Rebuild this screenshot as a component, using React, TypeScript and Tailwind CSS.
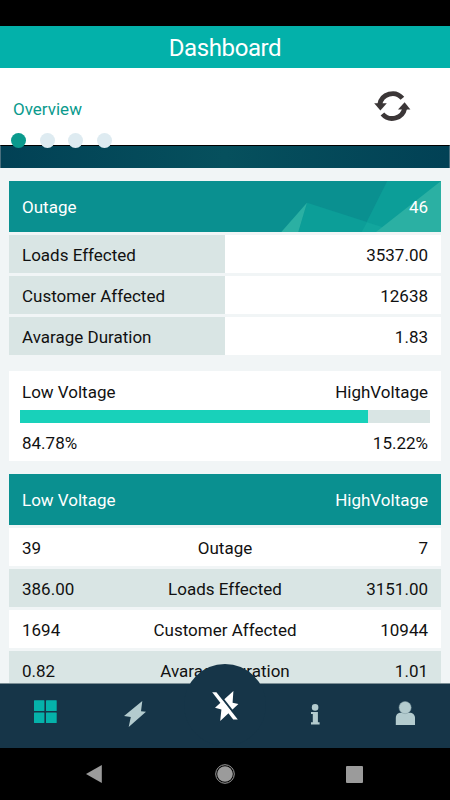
import type { ReactNode } from 'react';

const OUTAGE_ROWS = [
  { label: 'Loads Effected', value: '3537.00' },
  { label: 'Customer Affected', value: '12638' },
  { label: 'Avarage Duration', value: '1.83' },
];

const VOLTAGE_ROWS = [
  { low: '39', label: 'Outage', high: '7' },
  { low: '386.00', label: 'Loads Effected', high: '3151.00' },
  { low: '1694', label: 'Customer Affected', high: '10944' },
  { low: '0.82', label: 'Avarage Duration', high: '1.01' },
];

const LOW_SHARE = 84.78;

const RefreshIcon = () => (
  <svg width="38" height="32" viewBox="373 90 38 32" fill="none">
    <path d="M379.8 104.5 A12.9 12.9 0 0 1 402.4 98.3" stroke="#3b3637" strokeWidth="4.8" />
    <path d="M404.8 108 A12.9 12.9 0 0 1 382.4 114" stroke="#3b3637" strokeWidth="4.8" />
    <path d="M374.2 103.2H386.8L380.4 110.5Z" fill="#3b3637" />
    <path d="M398 109.4H410.4L404.6 102.2Z" fill="#3b3637" />
  </svg>
);

const GridIcon = () => (
  <svg width="24" height="24" viewBox="33 700 24 24" fill="#05b2aa">
    <rect x="34" y="700.3" width="10.4" height="10.7" rx="0.5" />
    <rect x="46" y="700.3" width="10.7" height="10.7" rx="0.5" />
    <rect x="34" y="712.4" width="10.4" height="10.7" rx="0.5" />
    <rect x="46" y="712.4" width="10.7" height="10.7" rx="0.5" />
  </svg>
);

const BoltIcon = () => (
  <svg width="24" height="28" viewBox="123 700 24 28" fill="#b3cbce">
    <path d="M142.3 701L141 711.2L146 711.7L128.7 727L130.8 717L124 716.1Z" />
  </svg>
);

const BoltOffIcon = () => (
  <svg width="30" height="32" viewBox="210 690 30 32">
    <path d="M233.4 691L232.6 702.8L238.4 704L220.2 721L221.4 709.5L215 707.7Z" fill="#fff" />
    <path d="M217.2 691.9L238.6 719.2" stroke="#163548" strokeWidth="2.2" />
    <path d="M212.2 692.3H216.4L237.8 719.6H233.2Z" fill="#fff" />
  </svg>
);

const InfoIcon = () => (
  <svg width="12" height="24" viewBox="309 702 12 24" fill="#b3cbce">
    <circle cx="315.1" cy="707.4" r="3.3" />
    <path d="M311 712H317.9V722.2H319.6V724.4H311V722.2H312.8V714H311Z" />
  </svg>
);

const PersonIcon = () => (
  <svg width="22" height="26" viewBox="394 700 22 26">
    <path d="M395.8 725V718C395.8 714.4 398 712.7 401 712.7H409.5C412.6 712.7 415 714.6 415 718V725Z" fill="#b3cbce" />
    <circle cx="405.1" cy="707.6" r="6.1" fill="#b3cbce" stroke="#7d979f" strokeWidth="0.5" />
  </svg>
);

const CardHeader = ({ children }: { children: ReactNode }) => (
  <div className="relative flex h-[51px] items-center justify-between bg-[#0a9090] px-[13px] pt-0.5 text-white">
    {children}
  </div>
);

const HeaderFacets = () => (
  <svg className="absolute inset-0" width="432" height="51" viewBox="0 0 432 51">
    <path d="M298 21.7L289.3 51H389Z" fill="#0c9e98" />
    <path d="M298 21.7L272.3 51H289.3Z" fill="#2bb0a3" />
    <path d="M378.3 0L352.7 51H432V0Z" fill="#0c9e98" />
    <path d="M358 41.2L352.7 51H389Z" fill="#12a69d" />
    <path d="M432 0L367 51H432Z" fill="#2bb0a3" />
  </svg>
);

export default function App() {
  return (
    <div className="flex h-[800px] w-[450px] flex-col overflow-hidden bg-[#f1f5f6] font-['Roboto',sans-serif] text-[17px] text-[#111]">
      <div className="h-[26px] shrink-0 bg-black" />
      <header className="flex h-[42px] shrink-0 items-center justify-center bg-[#03b1aa] pt-0.5 text-2xl tracking-[-0.4px] text-white">
        Dashboard
      </header>

      <section className="relative h-[77px] shrink-0 bg-white">
        <div className="flex items-center justify-between pt-[22px] pr-[39px] pl-[13px]">
          <span className="pt-[7px] text-[17px] text-[#0a9a8d]">Overview</span>
          <RefreshIcon />
        </div>
        <div className="absolute top-[65px] left-[11px] z-10 flex gap-[13.6px]">
          <span className="size-[15px] rounded-full bg-[#0a9a8d]" />
          <span className="size-[15px] rounded-full bg-[#deebf1]" />
          <span className="size-[15px] rounded-full bg-[#deebf1]" />
          <span className="size-[15px] rounded-full bg-[#deebf1]" />
        </div>
      </section>
      <div className="h-[23px] shrink-0 border-x border-t border-x-[#4a6f7e] border-t-black bg-linear-to-r from-[#024155] via-[#06505d] to-[#024155]" />

      <main className="min-h-0 flex-1 overflow-hidden px-[9px] pt-[13px]">
        <div className="flex flex-col gap-[3px]">
          <CardHeader>
            <HeaderFacets />
            <span className="relative">Outage</span>
            <span className="relative">46</span>
          </CardHeader>
          {OUTAGE_ROWS.map(row => (
            <div key={row.label} className="grid h-[38px] grid-cols-2 bg-white">
              <span className="flex items-center bg-[#d9e5e4] pt-1 pl-[13px]">{row.label}</span>
              <span className="flex items-center justify-end pt-1 pr-[13px]">{row.value}</span>
            </div>
          ))}
        </div>

        <div className="mt-4 h-[90px] bg-white px-[11px] pt-[9px]">
          <div className="flex h-[26px] items-center justify-between px-0.5">
            <span>Low Voltage</span>
            <span>HighVoltage</span>
          </div>
          <div className="mt-1 h-[13px] bg-[#d9e5e4]">
            <div className="h-full bg-[#18d1ba]" style={{ width: `${LOW_SHARE}%` }} />
          </div>
          <div className="mt-2 flex h-[26px] items-center justify-between px-0.5">
            <span>{LOW_SHARE}%</span>
            <span>{(100 - LOW_SHARE).toFixed(2)}%</span>
          </div>
        </div>

        <div className="mt-[13px] flex flex-col gap-[3px]">
          <CardHeader>
            <span>Low Voltage</span>
            <span>HighVoltage</span>
          </CardHeader>
          {VOLTAGE_ROWS.map(row => (
            <div
              key={row.label}
              className="grid h-[38px] grid-cols-[1fr_2fr_1fr] items-center px-[13px] pt-1 even:bg-white odd:bg-[#d9e5e4]"
            >
              <span>{row.low}</span>
              <span className="text-center">{row.label}</span>
              <span className="text-right">{row.high}</span>
            </div>
          ))}
        </div>
      </main>

      <nav className="relative grid h-[65px] shrink-0 grid-cols-5 border-t border-[#7b8e95] bg-[#163548]">
        <div className="absolute -top-5 left-[184px] size-[82px] rounded-full bg-[#163548]" />
        <div className="flex justify-center pt-4">
          <GridIcon />
        </div>
        <div className="flex justify-center pt-4">
          <BoltIcon />
        </div>
        <div className="relative flex justify-center pt-1.5">
          <BoltOffIcon />
        </div>
        <div className="flex justify-center pt-[18px]">
          <InfoIcon />
        </div>
        <div className="flex justify-center pt-4">
          <PersonIcon />
        </div>
      </nav>

      <div className="grid h-[52px] shrink-0 grid-cols-[129px_132px_127px] items-center justify-center justify-items-center bg-black pr-[3px]">
        <svg width="18" height="20" viewBox="85 764 18 20" fill="#9b9b9b">
          <path d="M86 774L101.8 765V783Z" />
        </svg>
        <svg width="22" height="22" viewBox="0 0 22 22">
          <circle cx="11" cy="11" r="9.3" fill="none" stroke="#9b9b9b" />
          <circle cx="11" cy="11" r="7.8" fill="#9b9b9b" />
        </svg>
        <div className="size-[17px] rounded-[1px] bg-[#9b9b9b]" />
      </div>
    </div>
  );
}
